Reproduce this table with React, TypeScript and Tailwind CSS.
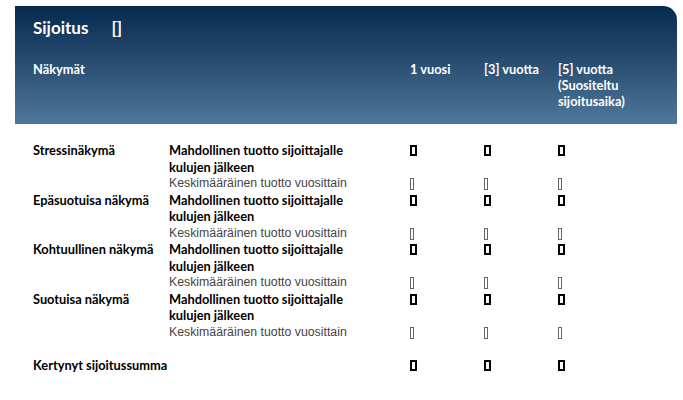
import React from "react";

const Tofu = ({ light = false }: { light?: boolean }) =>
  light ? (
    <span className="inline-block w-[4px] h-[12px] border border-[#666]" />
  ) : (
    <span className="inline-block w-[7px] h-[11px] border-[2px] border-black" />
  );

const groups = ["Stressinäkymä", "Epäsuotuisa näkymä", "Kohtuullinen näkymä", "Suotuisa näkymä"];

export default function App() {
  return (
    <div className="w-[683px] h-[400px] bg-white overflow-hidden" style={{ fontFamily: "Lato, 'Noto Sans', sans-serif" }}>
      <div className="ml-[15px] mt-[6px] w-[662px] h-[118px] rounded-tr-[14px] bg-gradient-to-b from-[#06294f] to-[#50789a] pl-[18px] pt-[9px] text-white">
        <div className="flex items-center h-[26px] text-[17px] font-bold">
          <span>Sijoitus</span>
          <span className="ml-[23px]">[]</span>
        </div>
        <div className="grid grid-cols-[377px_74px_74px_1fr] mt-[20px] text-[12.8px] font-bold leading-[16px]">
          <div>Näkymät</div>
          <div>1 vuosi</div>
          <div>[3] vuotta</div>
          <div>[5] vuotta<br />(Suositeltu<br />sijoitusaika)</div>
        </div>
      </div>
      <div className="pl-[33px] pt-[18px] text-[12.8px] leading-[16.5px] text-black">
        {groups.map((g) => (
          <div key={g} className="grid grid-cols-[136px_241px_74px_74px_1fr]">
            <div className="font-bold">{g}</div>
            <div className="font-bold">Mahdollinen tuotto sijoittajalle<br />kulujen jälkeen</div>
            <div className="flex items-start pt-[3px]"><Tofu /></div>
            <div className="flex items-start pt-[3px]"><Tofu /></div>
            <div className="flex items-start pt-[3px]"><Tofu /></div>
            <div />
            <div className="text-[#444] text-[12.3px]" style={{ fontFamily: "'Liberation Sans', Arial, sans-serif", fontWeight: 300 }}>Keskimääräinen tuotto vuosittain</div>
            <div className="flex items-center pt-[2px]"><Tofu light /></div>
            <div className="flex items-center pt-[2px]"><Tofu light /></div>
            <div className="flex items-center pt-[2px]"><Tofu light /></div>
          </div>
        ))}
        <div className="grid grid-cols-[377px_74px_74px_1fr] mt-[17px]">
          <div className="font-bold">Kertynyt sijoitussumma</div>
          <div className="flex items-center"><Tofu /></div>
          <div className="flex items-center"><Tofu /></div>
          <div className="flex items-center"><Tofu /></div>
        </div>
      </div>
    </div>
  );
}
